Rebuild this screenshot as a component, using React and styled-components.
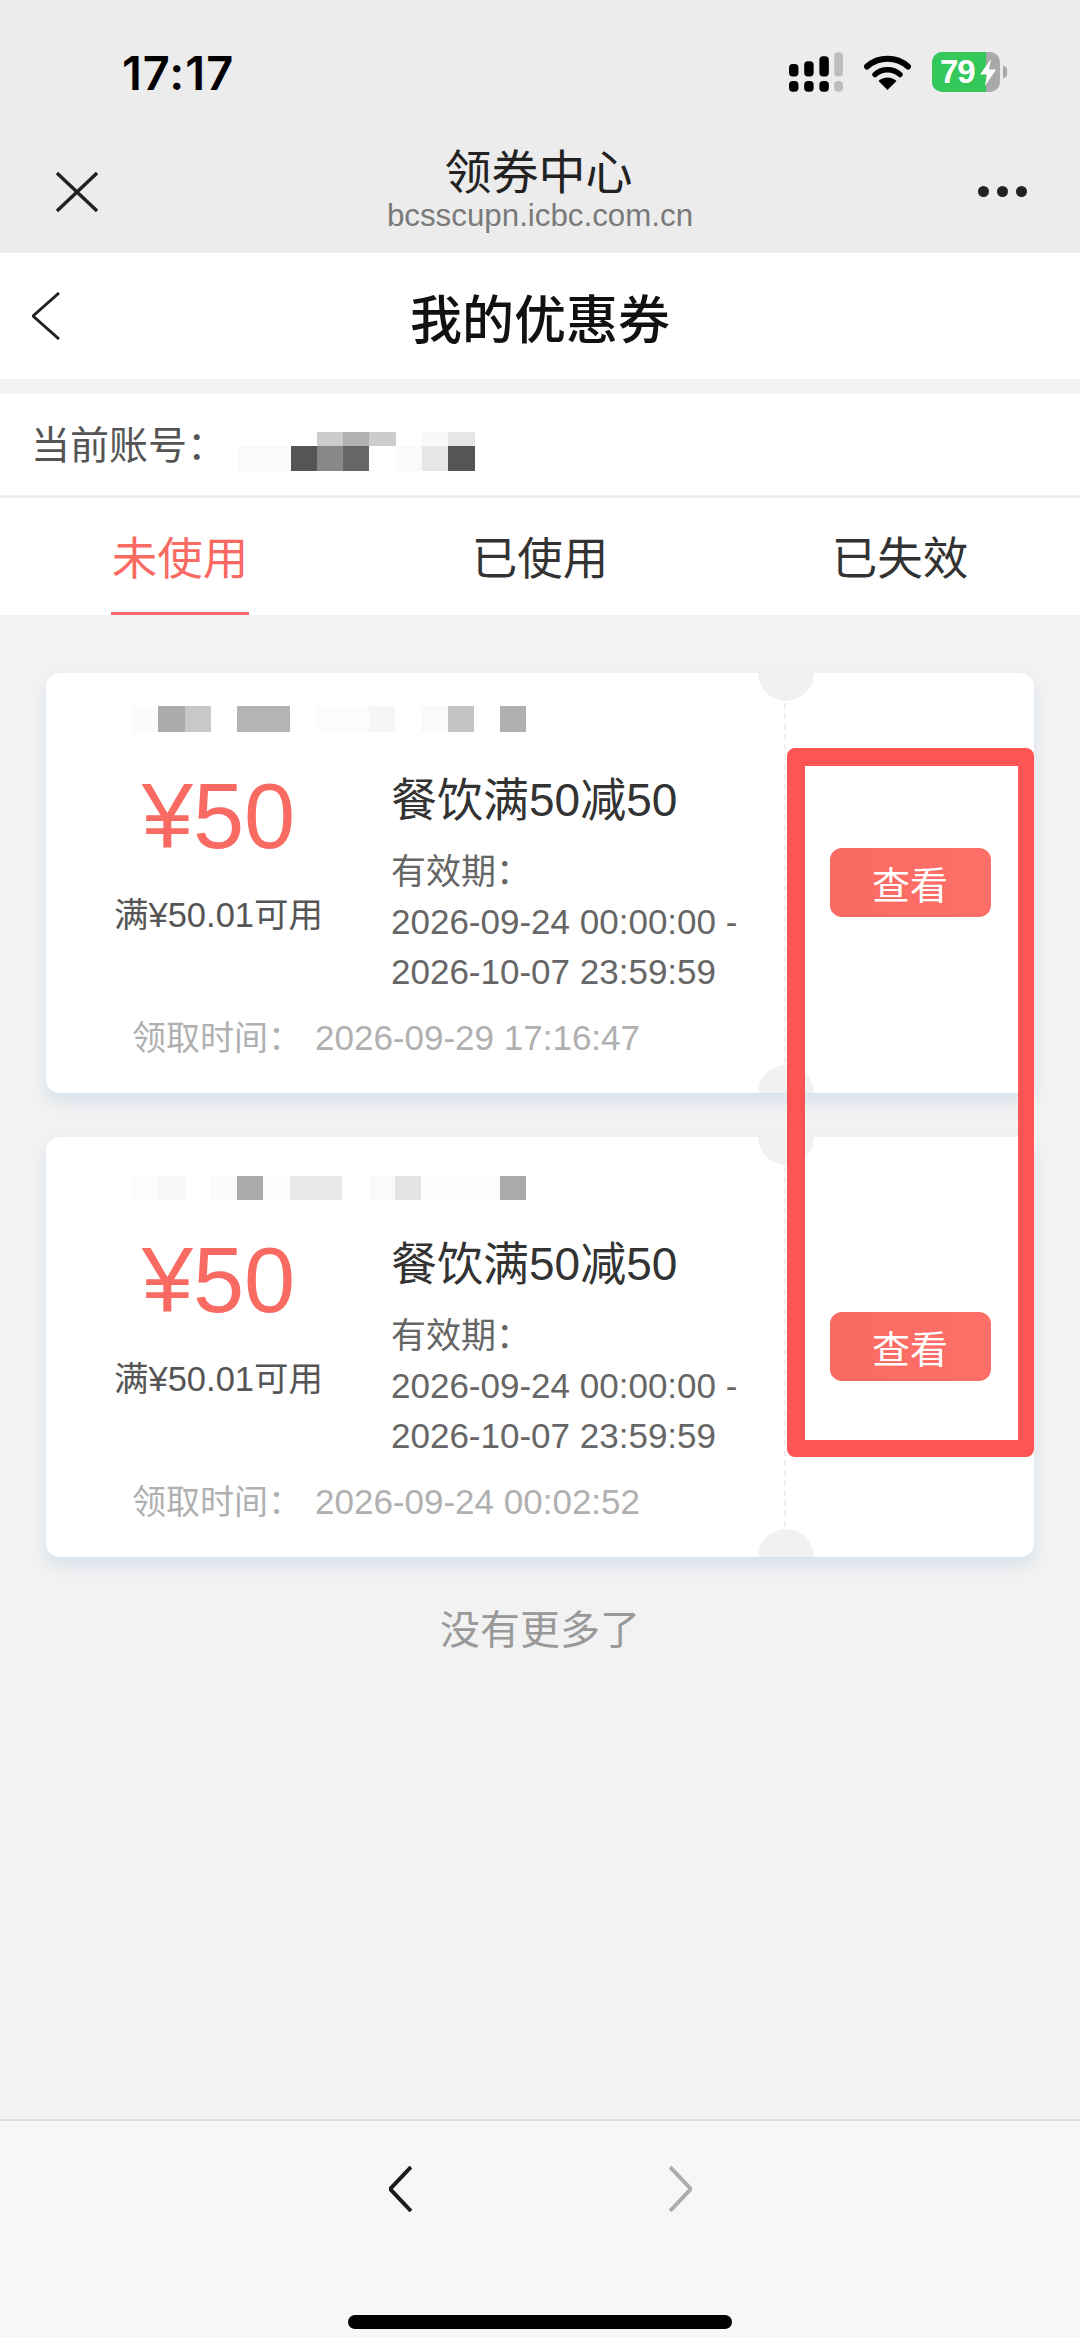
import React from "react";
import styled, { createGlobalStyle } from "styled-components";

const SANS = `"Liberation Sans", "Noto Sans CJK SC", sans-serif`;

const GlobalStyle = createGlobalStyle`
  html, body {
    margin: 0;
    padding: 0;
    background: #f2f2f2;
  }
  * {
    box-sizing: border-box;
  }
`;

const coupons = [
  {
    id: 1,
    mosaicTop: 33,
    mosaicHeight: 26,
    mosaic: ["#fbfbfb", "#ababab", "#c8c8c8", "#fff", "#b4b4b4", "#b4b4b4", "#fff", "#fcfcfc", "#fcfcfc", "#f6f6f6", "#fff", "#fafafa", "#c4c4c4", "#fff", "#b0b0b0"],
    received: "2026-09-29 17:16:47",
  },
  {
    id: 2,
    mosaicTop: 39,
    mosaicHeight: 24,
    mosaic: ["#fdfdfd", "#f7f7f7", "#fff", "#fafafa", "#aaaaaa", "#fdfdfd", "#e9e9e9", "#e9e9e9", "#fff", "#fafafa", "#e4e4e4", "#fdfdfd", "#fdfdfd", "#fcfcfc", "#aaaaaa"],
    received: "2026-09-24 00:02:52",
  },
];

const accountTop = ["#fff", "#fff", "#fff", "#ccc", "#b2b2b2", "#ccc", "#fff", "#f9f9f9", "#e6e6e6"];
const accountBottom = ["#fafafa", "#fafafa", "#555", "#888", "#666", "#fff", "#fafafa", "#e6e6e6", "#555"];

function SignalIcon() {
  return (
    <svg width="54" height="40" viewBox="0 0 160 117">
      <rect x="0" y="35" width="28" height="37" rx="11" fill="#000" />
      <rect x="45" y="27" width="28" height="45" rx="11" fill="#000" />
      <rect x="90" y="12" width="28" height="60" rx="11" fill="#000" />
      <rect x="134" y="0" width="26" height="72" rx="11" fill="#bdbdbd" />
      <rect x="0" y="85" width="28" height="32" rx="11" fill="#000" />
      <rect x="45" y="85" width="28" height="32" rx="11" fill="#000" />
      <rect x="90" y="85" width="28" height="32" rx="11" fill="#000" />
      <rect x="134" y="85" width="26" height="32" rx="11" fill="#bdbdbd" />
    </svg>
  );
}

function WifiIcon() {
  return (
    <svg width="47" height="36" viewBox="0 0 47 36">
      <path d="M3 12.5 A 31 31 0 0 1 44 12.5" fill="none" stroke="#000" strokeWidth="6" strokeLinecap="round" />
      <path d="M11 20.5 A 19 19 0 0 1 36 20.5" fill="none" stroke="#000" strokeWidth="5.5" strokeLinecap="round" />
      <path d="M23.5 36 L14.5 27 A 13 13 0 0 1 32.5 27 Z" fill="#000" />
    </svg>
  );
}

function BoltIcon() {
  return (
    <svg width="16" height="27" viewBox="0 0 16 27">
      <path d="M11 0 L0 15.5 H7 L5 27 L16 10.5 H9 Z" fill="#fff" />
    </svg>
  );
}

function Chevron({ left, color, width, height, stroke }) {
  const points = left
    ? `${width - 1},1 1,${height / 2} ${width - 1},${height - 1}`
    : `1,1 ${width - 1},${height / 2} 1,${height - 1}`;
  return (
    <svg width={width} height={height} viewBox={`0 0 ${width} ${height}`}>
      <polyline points={points} fill="none" stroke={color} strokeWidth={stroke} />
    </svg>
  );
}

function Coupon({ coupon }) {
  return (
    <Card>
      <Notch $edge="top" />
      <Notch $edge="bottom" />
      <Main>
        <MosaicSlot $top={coupon.mosaicTop}>
          <CouponMosaic $height={coupon.mosaicHeight}>
            {coupon.mosaic.map((c, i) => (
              <Tile key={i} $c={c} />
            ))}
          </CouponMosaic>
        </MosaicSlot>
        <Body>
          <Amount>
            <Price>¥50</Price>
            <Threshold>满¥50.01可用</Threshold>
          </Amount>
          <Detail>
            <CouponName>餐饮满50减50</CouponName>
            <DetailLine>有效期：</DetailLine>
            <DetailLine>2026-09-24 00:00:00 -</DetailLine>
            <DetailLine>2026-10-07 23:59:59</DetailLine>
          </Detail>
        </Body>
        <Received>
          <ReceivedLabel>领取时间：</ReceivedLabel>
          <span>{coupon.received}</span>
        </Received>
      </Main>
      <Side>
        <ViewButton>查看</ViewButton>
      </Side>
    </Card>
  );
}

export default function App() {
  return (
    <Page>
      <GlobalStyle />
      <BrowserHeader>
        <StatusBar>
          <Clock>17:17</Clock>
          <StatusIcons>
            <SignalIcon />
            <WifiIcon />
            <Battery>
              <BatteryText>79</BatteryText>
              <BoltIcon />
            </Battery>
            <BatteryNub />
          </StatusIcons>
        </StatusBar>
        <BrowserNav>
          <svg width="42" height="40" viewBox="0 0 42 40">
            <path d="M1 1 L41 39 M41 1 L1 39" fill="none" stroke="#222" strokeWidth="3.4" />
          </svg>
          <BrowserTitle>
            <SiteName>领券中心</SiteName>
            <SiteUrl>bcsscupn.icbc.com.cn</SiteUrl>
          </BrowserTitle>
          <Dots>
            <Dot />
            <Dot />
            <Dot />
          </Dots>
        </BrowserNav>
      </BrowserHeader>

      <PageHeader>
        <Chevron left width={28} height={48} stroke={3} color="#222" />
        <PageTitle>我的优惠券</PageTitle>
      </PageHeader>

      <AccountRow>
        <AccountLabel>当前账号：</AccountLabel>
        <AccountMosaic>
          {accountTop.concat(accountBottom).map((c, i) => (
            <Tile key={i} $c={c} />
          ))}
        </AccountMosaic>
      </AccountRow>

      <Tabs>
        <Tab>
          <TabLabel $active>未使用</TabLabel>
        </Tab>
        <Tab>
          <TabLabel>已使用</TabLabel>
        </Tab>
        <Tab>
          <TabLabel>已失效</TabLabel>
        </Tab>
      </Tabs>

      <Content>
        <CardList>
          {coupons.map((c) => (
            <Coupon key={c.id} coupon={c} />
          ))}
          <Highlight />
        </CardList>
        <NoMore>没有更多了</NoMore>
      </Content>

      <BottomBar>
        <BottomNav>
          <Chevron left width={23} height={46} stroke={4} color="#1c1c1c" />
          <Chevron width={23} height={46} stroke={4} color="#adadad" />
        </BottomNav>
        <HomeIndicator />
      </BottomBar>
    </Page>
  );
}

const Page = styled.div`
  width: 1080px;
  height: 2337px;
  display: flex;
  flex-direction: column;
  overflow: hidden;
  background: #f2f2f2;
  font-family: ${SANS};
`;

const BrowserHeader = styled.header`
  height: 253px;
  background: #ececec;
  display: flex;
  flex-direction: column;
`;

const StatusBar = styled.div`
  height: 144px;
  padding: 0 73px 0 122px;
  display: flex;
  align-items: center;
  justify-content: space-between;
`;

const Clock = styled.div`
  font-family: Inter, ${SANS};
  font-size: 47px;
  font-weight: 600;
  letter-spacing: 1px;
  color: #000;
`;

const StatusIcons = styled.div`
  display: flex;
  align-items: center;
  gap: 21px;
`;

const Battery = styled.div`
  width: 68px;
  height: 40px;
  border-radius: 10px;
  background: linear-gradient(90deg, #34c759 79%, #a9a9a9 79%);
  display: flex;
  align-items: center;
  padding-left: 8px;
  gap: 7px;
`;

const BatteryText = styled.span`
  font-size: 33px;
  font-weight: 700;
  letter-spacing: -1px;
  color: #fff;
  width: 33px;
`;

const BatteryNub = styled.div`
  width: 4px;
  height: 12px;
  margin-left: -18px;
  border-radius: 0 4px 4px 0;
  background: #a9a9a9;
`;

const BrowserNav = styled.div`
  flex: 1;
  padding: 0 53px 14px 56px;
  display: grid;
  grid-template-columns: 1fr auto 1fr;
  align-items: center;
`;

const BrowserTitle = styled.div`
  display: flex;
  flex-direction: column;
  align-items: center;
  margin-top: -3px;
  margin-left: -3px;
`;

const SiteName = styled.div`
  font-size: 47px;
  line-height: 52px;
  color: #222;
  margin-left: -3px;
`;

const SiteUrl = styled.div`
  font-size: 31.3px;
  line-height: 34px;
  color: #7a7a7a;
`;

const Dots = styled.div`
  justify-self: end;
  display: flex;
  gap: 8px;
`;

const Dot = styled.span`
  width: 11px;
  height: 11px;
  border-radius: 50%;
  background: #222;
`;

const PageHeader = styled.div`
  height: 126px;
  padding-left: 32px;
  background: #fff;
  display: grid;
  grid-template-columns: 1fr auto 1fr;
  align-items: center;
`;

const PageTitle = styled.h1`
  margin: 0 0 0 -32px;
  font-size: 52px;
  font-weight: 500;
  color: #111;
`;

const AccountRow = styled.div`
  height: 104px;
  margin-top: 15px;
  padding: 3px 0 0 31px;
  background: #fff;
  border-bottom: 3px solid #efefef;
  display: flex;
  align-items: center;
`;

const AccountLabel = styled.div`
  width: 207px;
  font-size: 39px;
  line-height: 50px;
  color: #555;
`;

const Mosaic = styled.div`
  display: grid;
`;

const AccountMosaic = styled(Mosaic)`
  grid-template-columns: repeat(9, 26.3px);
  grid-template-rows: 14px 25px;
  margin-top: 10px;
`;

const CouponMosaic = styled(Mosaic)`
  grid-template-columns: repeat(15, 26.3px);
  height: ${(p) => p.$height}px;
`;

const Tile = styled.span`
  background: ${(p) => p.$c};
`;

const Tabs = styled.nav`
  height: 117px;
  background: #fff;
  display: grid;
  grid-template-columns: repeat(3, 1fr);
`;

const Tab = styled.div`
  display: flex;
  justify-content: center;
`;

const TabLabel = styled.div`
  width: 138px;
  display: flex;
  align-items: center;
  justify-content: center;
  font-size: 45.5px;
  color: ${(p) => (p.$active ? "#f96a63" : "#333")};
  border-bottom: 3px solid ${(p) => (p.$active ? "#f56c6c" : "transparent")};
`;

const Content = styled.main`
  flex: 1;
  padding-top: 58px;
`;

const CardList = styled.div`
  position: relative;
  padding: 0 46px;
  display: flex;
  flex-direction: column;
  gap: 44px;
`;

const Card = styled.article`
  position: relative;
  height: 420px;
  display: flex;
  overflow: hidden;
  border-radius: 14px;
  background: #fff;
  box-shadow: 0 8px 16px rgba(185, 203, 228, 0.45);
`;

const Notch = styled.span`
  position: absolute;
  left: 712px;
  ${(p) => p.$edge}: -28px;
  width: 56px;
  height: 56px;
  border-radius: 50%;
  background: #f1f1f1;
`;

const Main = styled.div`
  width: 740px;
  border-right: 2px dashed #eeeeee;
`;

const MosaicSlot = styled.div`
  height: 97px;
  padding: ${(p) => p.$top}px 0 0 86px;
`;

const Body = styled.div`
  display: flex;
`;

const Amount = styled.div`
  width: 345px;
  display: flex;
  flex-direction: column;
  align-items: center;
`;

const Price = styled.div`
  font-size: 92px;
  line-height: 92px;
  color: #f96a63;
`;

const Threshold = styled.div`
  margin-top: 28px;
  font-size: 34.5px;
  line-height: 50px;
  color: #555;
  white-space: nowrap;
`;

const Detail = styled.div`
  display: flex;
  flex-direction: column;
`;

const CouponName = styled.div`
  margin-bottom: 17px;
  font-size: 46px;
  line-height: 60px;
  color: #333;
  white-space: nowrap;
`;

const DetailLine = styled.div`
  font-size: 35px;
  line-height: 50px;
  color: #666;
  white-space: nowrap;
`;

const Received = styled.div`
  margin-top: 16px;
  padding-left: 86px;
  display: flex;
  font-size: 35px;
  line-height: 50px;
  color: #b0b0b0;
`;

const ReceivedLabel = styled.span`
  width: 183px;
  font-size: 34px;
`;

const Side = styled.div`
  flex: 1;
  display: flex;
  align-items: center;
  justify-content: center;
`;

const ViewButton = styled.div`
  width: 161px;
  height: 69px;
  margin-top: -2px;
  border-radius: 12px;
  background: linear-gradient(90deg, #f96a63, #fe6f68);
  display: flex;
  align-items: center;
  justify-content: center;
  font-size: 38px;
  color: #fff;
`;

const Highlight = styled.div`
  position: absolute;
  left: 787px;
  top: 75px;
  width: 247px;
  height: 709px;
  border: solid #fe5454;
  border-width: 18px 16px 17px 18px;
  border-radius: 8px;
  pointer-events: none;
`;

const NoMore = styled.div`
  margin-top: 48px;
  text-align: center;
  font-size: 40px;
  line-height: 50px;
  color: #999;
`;

const BottomBar = styled.footer`
  height: 218px;
  background: #f7f7f7;
  border-top: 2px solid #dedede;
  display: flex;
  flex-direction: column;
  align-items: center;
  padding-bottom: 8px;
`;

const BottomNav = styled.div`
  margin-top: 45px;
  display: flex;
  gap: 257px;
`;

const HomeIndicator = styled.div`
  width: 384px;
  height: 14px;
  margin-top: auto;
  border-radius: 7px;
  background: #000;
`;
